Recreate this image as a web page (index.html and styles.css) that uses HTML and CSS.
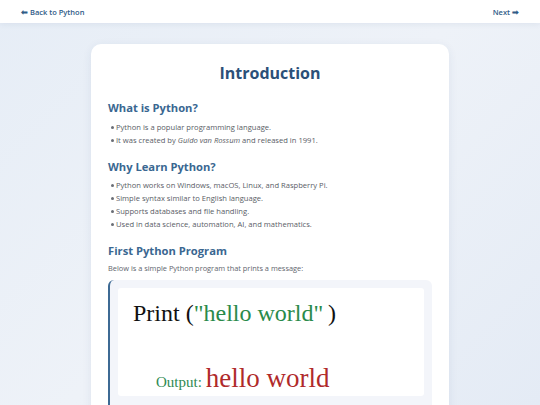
FILE: index.html
```html
<!DOCTYPE html>
<html lang="en">
<head>
<meta charset="utf-8">
<title>Introduction</title>
<link rel="stylesheet" href="styles.css">
</head>
<body>
<nav class="topnav">
  <a class="navlink" href="#">&#11013; Back to Python</a>
  <a class="navlink" href="#">Next &#10145;</a>
</nav>
<main class="page">
  <article class="card">
    <h1 class="title">Introduction</h1>
    <h2 class="sub">What is Python?</h2>
    <ul class="list">
      <li>Python is a popular programming language.</li>
      <li>It was created by <em>Guido van Rossum</em> and released in 1991.</li>
    </ul>
    <h2 class="sub">Why Learn Python?</h2>
    <ul class="list">
      <li>Python works on Windows, macOS, Linux, and Raspberry Pi.</li>
      <li>Simple syntax similar to English language.</li>
      <li>Supports databases and file handling.</li>
      <li>Used in data science, automation, AI, and mathematics.</li>
    </ul>
    <h2 class="sub">First Python Program</h2>
    <p class="desc">Below is a simple Python program that prints a message:</p>
    <div class="codebox">
      <div class="codeimg">
        <div class="codeline"><span class="kw">Print</span> <span class="par">(</span><span class="str">"hello world"</span><span class="par">&#8201;)</span></div>
        <div class="outline"><span class="outlabel">Output:</span> <span class="outval">hello world</span></div>
      </div>
    </div>
  </article>
</main>
</body>
</html>
```
FILE: styles.css
```css
* { box-sizing: border-box; }
html, body { margin: 0; padding: 0; }
body {
  font-family: "Open Sans", "Liberation Sans", sans-serif;
  background: linear-gradient(135deg, #e6edf6 0%, #eef2f8 50%, #e4ebf5 100%);
  height: 405px;
  overflow: hidden;
}
.topnav {
  height: 23px;
  background: #ffffff;
  display: flex;
  justify-content: space-between;
  align-items: center;
  padding: 0 21px;
  box-shadow: 0 1px 6px rgba(40, 70, 110, 0.08);
}
.navlink {
  color: #2f5b87;
  font-size: 7.5px;
  font-weight: 600;
  text-decoration: none;
}
.page {
  display: flex;
  justify-content: center;
  padding-top: 21px;
}
.card {
  width: 358px;
  background: #ffffff;
  border-radius: 10px;
  padding: 17px 17px 20px;
  box-shadow: 0 2px 10px rgba(40, 70, 110, 0.08);
  height: 420px;
}
.title {
  margin: 0;
  padding-bottom: 3px;
  text-align: center;
  color: #2b5078;
  font-size: 16px;
  font-weight: 700;
  line-height: 24px;
}
.sub {
  margin: 12px 0 0;
  color: #3a6791;
  font-size: 11.2px;
  font-weight: 700;
  line-height: 16px;
}
.list {
  margin: 4.5px 0 0;
  padding-left: 8px;
  list-style: none;
}
.list li {
  position: relative;
  font-size: 7.6px;
  line-height: 13px;
  color: #595d66;
}
.list li::before {
  content: "";
  position: absolute;
  left: -5px;
  top: 5px;
  width: 3px;
  height: 3px;
  border-radius: 50%;
  background: #6a6e76;
}
.list em { font-style: italic; }
.desc {
  margin: 3px 0 0;
  font-size: 7.4px;
  line-height: 12px;
  color: #62666e;
}
.codebox {
  margin-top: 6px;
  background: #f3f5fa;
  border-left: 2px solid #3d6a94;
  border-radius: 6px;
  padding: 8px 8px 20px 8px;
}
.codeimg {
  background: #ffffff;
  border-radius: 3px;
  height: 108px;
  padding: 10px 0 0 15px;
  font-family: "Liberation Serif", "DejaVu Serif", serif;
}
.codeline {
  font-size: 24px;
  line-height: 30px;
  color: #111111;
}
.kw { color: #111111; }
.str { color: #2a8a4a; }
.par { color: #111111; }
.outline {
  margin-top: 37px;
  padding-left: 23px;
  line-height: 26px;
}
.outlabel {
  font-size: 15px;
  color: #2e8a52;
}
.outval {
  font-size: 27px;
  color: #b02a2a;
}
```
